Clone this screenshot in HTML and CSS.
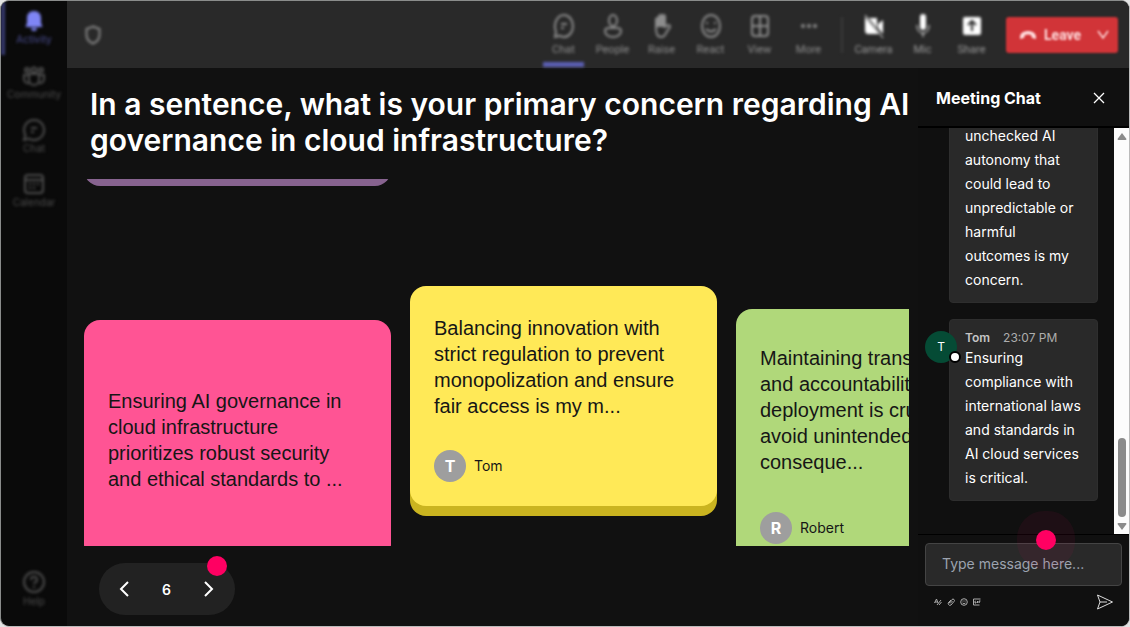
FILE: index.html
```html
<!DOCTYPE html>
<html lang="en">
<head>
<meta charset="utf-8">
<title>Meeting</title>
<link rel="stylesheet" href="styles.css">
</head>
<body>
<div class="window">
  <nav class="rail" aria-label="Apps">
    <a class="rail-item active" href="#">
      <svg width="20" height="22" viewBox="0 0 20 22"><path fill="currentColor" d="M10 1C5.500 1 3 4.200 3 8v5L1.500 17h17L17 13V8c0-3.800-2.500-7-7-7zM7 18a3 3 0 0 0 6 0z"/></svg>
      <span>Activity</span>
    </a>
    <a class="rail-item" href="#">
      <svg class="line" width="24" height="22" viewBox="0 0 24 22"><circle cx="5" cy="5" r="2"/><circle cx="12" cy="5" r="2.500"/><circle cx="19" cy="5" r="2"/><path d="M7 9h10v6a5 5 0 0 1-10 0zM7 10H2v4a4 4 0 0 0 5 4M17 10h5v4a4 4 0 0 1-5 4"/></svg>
      <span>Community</span>
    </a>
    <a class="rail-item" href="#">
      <svg class="line" width="24" height="22" viewBox="0 0 24 22"><path d="M12 1a10 10 0 1 1-5 18.600L2 21l1.400-5A10 10 0 0 1 12 1zM9 9h6M9 13h3"/></svg>
      <span>Chat</span>
    </a>
    <a class="rail-item" href="#">
      <svg class="line" width="22" height="22" viewBox="0 0 22 22"><rect x="2" y="2" width="18" height="18" rx="3"/><path d="M2 7h18M6 11h2M10 11h2M14 11h2M6 15h2M10 15h2"/></svg>
      <span>Calendar</span>
    </a>
    <a class="rail-item help" href="#">
      <svg class="line" width="24" height="24" viewBox="0 0 24 24"><circle cx="12" cy="12" r="10"/><path d="M9 10a3 3 0 1 1 4 2.500q-1 .5-1 1.500M12 16v2"/></svg>
      <span>Help</span>
    </a>
  </nav>

  <div class="content">
    <header class="toolbar">
      <svg class="line shield" width="18" height="20" viewBox="0 0 18 20"><path d="M9 1.500L15.500 4v6c0 4-3 7-6.500 8.500C5.500 17 2.500 14 2.500 10V4z"/></svg>
      <div class="tools">
        <button class="tool selected" type="button"><svg class="line" width="22" height="26" viewBox="0 0 22 26"><path d="M11 2c5 0 9 5 9 11s-4 11-9 11c-2 0-3-.5-4-1.300L2 24l1-5C0 11 4 2 11 2zM8 11h6M8 15h3"/></svg>Chat</button>
        <button class="tool" type="button"><svg class="line" width="22" height="26" viewBox="0 0 22 26"><ellipse cx="11" cy="7.500" rx="4" ry="5.500"/><path d="M7 15h8c3 0 4 1 4 3 0 4-4 6-8 6s-8-2-8-6c0-2 1-3 4-3z"/></svg>People</button>
        <button class="tool" type="button"><svg class="line" width="22" height="26" viewBox="0 0 22 26"><path fill="currentColor" d="M5 13V6q1.500-2 3 0V3q1.500-2 3 0q1.500-2 3 0v10z"/><path d="M5 12v3c0 5 1 9 5 9 2 0 4-1 5-4l4-6q0-2-2-2l-3 2V6"/></svg>Raise</button>
        <button class="tool" type="button"><svg class="line" width="22" height="26" viewBox="0 0 22 26"><ellipse cx="11" cy="13" rx="9" ry="11"/><path d="M6 16q5 5 10 0M7 9v2M15 9v2"/></svg>React</button>
        <button class="tool" type="button"><svg class="line" width="22" height="26" viewBox="0 0 22 26"><rect x="3" y="3" width="16" height="20" rx="3"/><path d="M11 3v20M3 13h16"/></svg>View</button>
        <button class="tool" type="button"><svg width="22" height="26" viewBox="0 0 22 26"><g fill="currentColor"><circle cx="5" cy="13" r="2"/><circle cx="11" cy="13" r="2"/><circle cx="17" cy="13" r="2"/></g></svg>More</button>
        <span class="divider"></span>
        <button class="tool solid" type="button"><svg width="22" height="26" viewBox="0 0 22 26"><path fill="currentColor" d="M2 4l14 17H5q-3 0-3-4zM6 5h8v10zM15 11l5-4v14l-5-6z"/><path stroke="currentColor" d="M2 2l18 23"/></svg><span>Camera</span></button>
        <button class="tool solid" type="button"><svg width="22" height="26" viewBox="0 0 22 26"><rect x="8" y="1" width="6" height="16" rx="3" fill="currentColor"/><path fill="none" stroke="currentColor" d="M5 12c0 5 2 8 6 8s6-3 6-8M11 20v4"/></svg><span>Mic</span></button>
        <button class="tool solid" type="button"><svg width="22" height="26" viewBox="0 0 22 26"><rect x="2" y="4" width="18" height="18" rx="2" fill="currentColor"/><path fill="none" stroke="#292929" stroke-width="2" d="M11 18V8M7 12l4-4 4 4"/></svg><span>Share</span></button>
      </div>
      <button class="leave" type="button">
        <svg width="18" height="12" viewBox="0 0 18 12"><path fill="currentColor" d="M1 8c0-4 4-6 8-6s8 2 8 6v2l-4-1-1-3q-3-1-6 0L5 9l-4 1z"/></svg>
        <span>Leave</span>
        <svg class="caret" width="14" height="10" viewBox="0 0 14 10"><path fill="none" stroke="currentColor" stroke-width="1.500" d="M2 1l5 7 5-7"/></svg>
      </button>
    </header>

    <div class="workspace">
      <main class="stage">
        <h1>In a sentence, what is your primary concern regarding AI governance in cloud infrastructure?</h1>
        <div class="board">
          <div class="column">
            <article class="card purple"></article>
            <article class="card pink"><p>Ensuring AI governance in cloud infrastructure prioritizes robust security and ethical standards to ...</p></article>
          </div>
          <div class="column">
            <article class="card yellow">
              <p>Balancing innovation with strict regulation to prevent monopolization and ensure fair access is my m...</p>
              <footer><span class="initial">T</span>Tom</footer>
            </article>
          </div>
          <div class="column">
            <article class="card green">
              <p>Maintaining transparency and accountability in AI deployment is crucial to avoid unintended conseque...</p>
              <footer><span class="initial">R</span>Robert</footer>
            </article>
          </div>
        </div>
        <div class="pager">
          <button type="button" aria-label="Previous"><svg width="12" height="18" viewBox="0 0 12 18"><path d="M10 2L3 9l7 7"/></svg></button>
          <span>6</span>
          <button type="button" aria-label="Next"><svg width="12" height="18" viewBox="0 0 12 18"><path d="M2 2l7 7-7 7"/></svg></button>
          <i class="dot"></i>
        </div>
      </main>

      <aside class="chat">
        <header class="chat-head">
          <h2>Meeting Chat</h2>
          <button type="button" aria-label="Close"><svg width="14" height="14" viewBox="0 0 14 14"><path d="M2 2l10 10M12 2L2 12"/></svg></button>
        </header>
        <div class="log">
          <div class="messages">
            <div class="bubble"><p>unchecked AI autonomy that could lead to unpredictable or harmful outcomes is my concern.</p></div>
            <div class="bubble">
              <span class="avatar">T<i></i></span>
              <div class="meta"><b>Tom</b><time>23:07 PM</time></div>
              <p>Ensuring compliance with international laws and standards in AI cloud services is critical.</p>
            </div>
          </div>
          <div class="scrollbar">
            <svg width="10" height="7" viewBox="0 0 10 7"><path d="M5 0l4.500 6q0 1-1 1h-7q-1 0-1-1z"/></svg>
            <span class="thumb"></span>
            <svg width="10" height="7" viewBox="0 0 10 7"><path d="M5 7l4.500-6q0-1-1-1h-7q-1 0-1 1z"/></svg>
          </div>
        </div>
        <form class="composer">
          <input type="text" aria-label="Message" placeholder="Type message here...">
          <div class="actions">
            <button type="button" aria-label="Format"><svg width="8" height="8" viewBox="0 0 8 8"><path d="M.5 5L2.500 1 4 5M1 4h2.500M3 7l4-5M5 7l2.500-3"/></svg></button>
            <button type="button" aria-label="Attach"><svg width="8" height="8" viewBox="0 0 8 8"><path d="M2 5l3-3.500q1-1 2 0t0 2L4 7Q2.500 8 1.500 6.500T2 4l2-2M3 5.500L5.500 3"/></svg></button>
            <button type="button" aria-label="Emoji"><svg width="8" height="8" viewBox="0 0 8 8"><circle cx="4" cy="4" r="3.300"/><path d="M2.500 5q1.500 1.300 3 0M3 2.500v1M5 2.500v1"/></svg></button>
            <button type="button" aria-label="GIF"><svg width="8" height="8" viewBox="0 0 8 8"><path d="M7.500 1h-7v6h6M2.500 3H2v2h1V4M4.500 3v2M6 5V3h1.500M6 4h1"/></svg></button>
            <button class="send" type="submit" aria-label="Send"><svg width="18" height="16" viewBox="0 0 18 16"><path d="M1.500 1L16.500 8l-15 7 2.500-7zM4 8h7"/></svg></button>
          </div>
          <i class="dot pulse"></i>
        </form>
      </aside>
    </div>
  </div>
</div>
</body>
</html>
```
FILE: styles.css
```css
* { box-sizing: border-box; }
body { margin: 0; background: #e4e4e4; color: #fff; font-family: Inter, sans-serif; }
h1, h2, p { margin: 0; }
svg { display: block; flex: none; }
button { border: 0; padding: 0; background: none; color: inherit; font: inherit; }
.line { fill: none; stroke: currentColor; stroke-width: 2; }

.window { display: flex; height: 100vh; border: 1px solid #8a8c8b; border-right-color: #bbb; border-bottom-color: #bbb; border-radius: 9px; overflow: hidden; background: #0a0a0a; }

.rail { flex: none; width: 66px; display: flex; flex-direction: column; filter: blur(1.4px); }
.rail-item { height: 54px; padding-top: 10px; display: flex; flex-direction: column; align-items: center; gap: 1px; color: #4d4d4d; font-size: 10px; line-height: 12px; text-decoration: none; }
.rail-item.active { padding-top: 9px; border-left: 4px solid #373a70; padding-right: 4px; color: #4a4d91; }
.rail-item.active svg { color: #7f85f5; }
.rail-item.help { margin-top: auto; margin-bottom: 12px; }

.content { flex: 1; min-width: 0; display: flex; flex-direction: column; }
.toolbar { flex: none; height: 67px; display: flex; align-items: center; padding: 0 11px 0 17px; background: #292929; }
.toolbar > *, .tools > * { flex: none; }
.shield { color: #858585; filter: blur(1.4px); }
.tools { margin-left: auto; display: flex; align-items: center; filter: blur(1.4px); }
.tool { position: relative; width: 49px; height: 67px; padding-top: 12px; display: flex; flex-direction: column; align-items: center; gap: 4px; color: #8d8d8d; font: 11px/14px Roboto, sans-serif; }
.tool.selected::after { content: ""; position: absolute; bottom: 1px; left: 4px; right: 4px; height: 5px; background: #5b5fb5; }
.tool.solid { color: #fff; }
.tool.solid span { color: #9a9a9a; }
.divider { width: 2px; height: 36px; margin: 0 6px 0 8px; background: #3b3b3b; }
.leave { width: 112px; height: 36px; margin-left: 10px; padding: 0 8px 0 13px; display: flex; align-items: center; gap: 7px; border-radius: 3px; background: #d13438; color: #ffdcdd; font: 700 14px/20px Roboto, sans-serif; filter: blur(1.2px); }
.caret { margin-left: auto; }

.workspace { flex: 1; min-height: 0; display: flex; }
.stage { flex: 1; min-width: 0; padding: 18px 9px 11px 17px; display: flex; flex-direction: column; align-items: flex-start; background: #111; }
h1 { margin-right: -9px; padding-left: 6px; font-size: 30px; line-height: 36px; font-weight: 600; }
.board { flex: 1; min-height: 0; width: 100%; margin-top: 21px; display: flex; gap: 19px; overflow: hidden; }
.column { flex: none; width: 307px; display: flex; flex-direction: column; }
.card { flex: none; padding: 29px 24px 24px; border-radius: 16px; color: #161616; font: 20px/26px "Liberation Sans", Arial, sans-serif; }
.card footer { display: flex; align-items: center; gap: 8px; margin-top: 31px; font: 14px/20px Inter, sans-serif; }
.initial { width: 32px; height: 32px; border-radius: 50%; background: #9e9e9e; color: #fff; font-size: 16px; line-height: 32px; font-weight: 700; text-align: center; }
.purple { height: 60px; margin: -53px 0 134px; padding: 0; background: #87638f; }
.pink { padding: 68px 24px; background: #ff5494; }
.yellow { margin-top: 107px; background: #ffe957; box-shadow: 0 10px 0 #cab420; }
.green { margin-top: 130px; padding-top: 36px; background: #b0d87a; }
.green footer { margin-top: 37px; }

.dot { position: absolute; width: 20px; height: 20px; border-radius: 50%; background: #ff0062; }
.pager { position: relative; width: 136px; height: 52px; margin: 17px 0 0 15px; padding: 0 20px 0 19px; display: flex; align-items: center; justify-content: space-between; border-radius: 26px; background: #222; font-size: 14px; font-weight: 600; }
.pager svg, .chat-head svg, .actions svg { fill: none; stroke: #fff; stroke-width: 2; }
.pager .dot { top: -7px; right: 8px; }

.chat { flex: none; width: 211px; display: flex; flex-direction: column; background: #101010; }
.chat-head { flex: none; height: 60px; padding: 2px 23px 0 18px; display: flex; align-items: center; justify-content: space-between; border-bottom: 2px solid #000; }
h2 { font-size: 16px; line-height: 24px; font-weight: 700; }
.chat-head svg { stroke-width: 1.3; }
.log { flex: 1; min-height: 0; display: flex; }
.messages { flex: 1; min-width: 0; padding: 0 16px 33px 31px; display: flex; flex-direction: column; justify-content: flex-end; gap: 16px; overflow: hidden; }
.bubble { flex: none; position: relative; padding: 10px 15px; border: 1px solid #2e2e2e; border-radius: 4px; background: #292929; font-size: 14px; line-height: 24px; }
.meta { display: flex; gap: 13px; color: #adadad; font-size: 12px; line-height: 16px; }
.meta b { color: #c4c4c4; font-weight: 600; }
.avatar { position: absolute; left: -25px; top: 11px; width: 32px; height: 32px; border-radius: 50%; background: #054b35; font-size: 12px; line-height: 32px; text-align: center; }
.avatar i { position: absolute; right: -4px; bottom: 0; width: 12px; height: 12px; border: 2px solid #000; border-radius: 50%; background: #fff; }
.scrollbar { flex: none; width: 15px; padding: 5px 0 4px; display: flex; flex-direction: column; align-items: center; gap: 6px; background: #fcfcfc; }
.scrollbar svg { fill: #8b8b8b; }
.thumb { width: 8px; height: 79px; margin-top: auto; border-radius: 4px; background: #8b8b8b; }

.composer { flex: none; position: relative; padding: 8px 7px 16px; border-top: 1px solid #000; }
.composer input { display: block; width: 100%; height: 43px; padding: 0 16px 2px; border: 1px solid #444; border-radius: 4px; background: #292929; color: #fff; font: 14px/20px Inter, sans-serif; }
.composer input::placeholder { color: #9ca3af; opacity: 1; }
.actions { display: flex; align-items: center; gap: 5px; margin-top: 8px; padding: 0 8px 0 9px; }
.actions svg { stroke: #aaa; stroke-width: 1; }
.actions .send { margin-left: auto; }
.actions .send svg { stroke: #ddd; }
.pulse { top: -5px; left: 118px; box-shadow: 0 0 0 19px rgba(255, 0, 98, 0.06); }
```
